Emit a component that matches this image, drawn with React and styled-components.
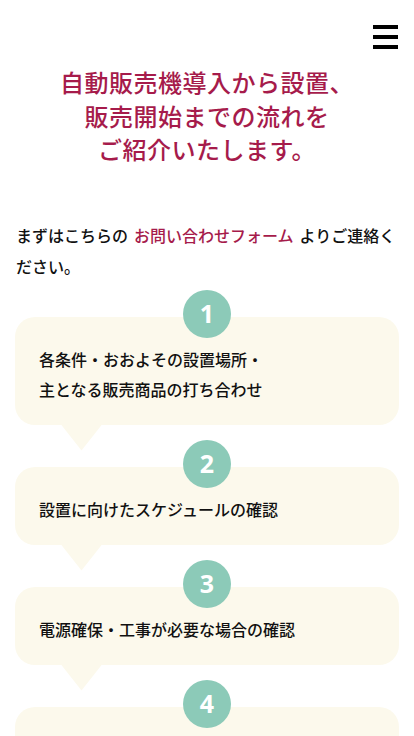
import React from "react";
import styled, { createGlobalStyle } from "styled-components";

const steps = [
    { num: 1, text: ["各条件・おおよその設置場所・", "主となる販売商品の打ち合わせ"] },
    { num: 2, text: ["設置に向けたスケジュールの確認"] },
    { num: 3, text: ["電源確保・工事が必要な場合の確認"] },
    { num: 4, text: ["ご契約・設置日の決定"] },
];

const App = () => {
    return (
        <Page>
            <GlobalStyle />
            <Header>
                <MenuButton aria-label="menu">
                    <Bar />
                    <Bar />
                    <Bar />
                </MenuButton>
            </Header>
            <Title>
                自動販売機導入から設置、<br />
                販売開始までの流れを<br />
                ご紹介いたします。
            </Title>
            <Lead>
                まずはこちらの<Link href="#">お問い合わせフォーム</Link>よりご連絡ください。
            </Lead>
            <Flow>
                {
                    steps.map((item) => {
                        return (
                            <Step key={item.num}>
                                <Number>{item.num}</Number>
                                <Card>
                                    {item.text.map((line, i) => (
                                        <Line key={i}>{line}</Line>
                                    ))}
                                </Card>
                            </Step>
                        )
                    })
                }
            </Flow>
        </Page>
    )
}

const GlobalStyle = createGlobalStyle`
  body {
    margin: 0;
    background: #fff;
    font-family: "Noto Sans CJK JP", "Noto Sans", sans-serif;
    color: #111;
  }
`;

const Page = styled.div`
  width: 414px;
  min-height: 736px;
  overflow: hidden;
`;

const Header = styled.header`
  display: flex;
  justify-content: flex-end;
  padding: 25px 16px 0;
  height: 40px;
`;

const MenuButton = styled.button`
  display: flex;
  flex-direction: column;
  gap: 6px;
  width: 25px;
  padding: 0;
  border: none;
  background: none;
`;

const Bar = styled.span`
  display: block;
  width: 25px;
  height: 4px;
  background: #000;
`;

const Title = styled.h1`
  margin: 0;
  text-align: center;
  font-size: 24px;
  line-height: 33.5px;
  font-weight: 500;
  color: #a61b4b;
  letter-spacing: 0.02em;
`;

const Lead = styled.p`
  margin: 54px 0 0;
  padding: 0 16px;
  font-size: 16px;
  line-height: 31px;
  font-weight: 500;
`;

const Link = styled.a`
  margin: 0 6px;
  color: #a61b4b;
  text-decoration: none;
`;

const Flow = styled.div`
  display: flex;
  flex-direction: column;
  gap: 15px;
  margin-top: 8px;
  padding: 0 15px;
`;

const Step = styled.div`
  display: flex;
  flex-direction: column;
  align-items: center;
`;

const Number = styled.div`
  position: relative;
  z-index: 1;
  display: flex;
  align-items: center;
  justify-content: center;
  width: 48px;
  height: 48px;
  margin-bottom: -21px;
  border-radius: 50%;
  background: #8ccab8;
  color: #fff;
  font-family: "Noto Sans", sans-serif;
  font-size: 25px;
  font-weight: 700;
  line-height: 1;
`;

const Card = styled.div`
  position: relative;
  align-self: stretch;
  padding: 27px 24px 21px;
  border-radius: 20px;
  background: #fcf9ec;

  &::after {
    content: "";
    position: absolute;
    left: 46px;
    top: 100%;
    width: 41px;
    height: 26px;
    background: #fcf9ec;
    clip-path: polygon(0 0, 100% 0, 50% 100%);
  }
`;

const Line = styled.p`
  margin: 0;
  font-size: 16px;
  line-height: 30px;
  font-weight: 500;
`;

export default App;
